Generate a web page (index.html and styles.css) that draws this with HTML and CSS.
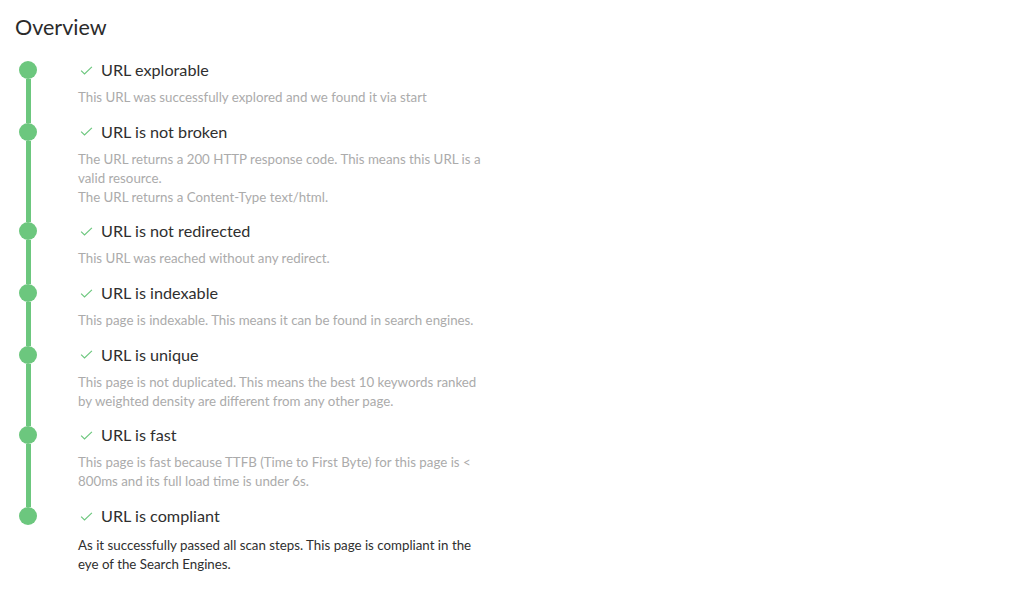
FILE: index.html
```html
<!DOCTYPE html>
<html>
<head>
<meta charset="utf-8">
<link rel="stylesheet" href="styles.css">
</head>
<body>
<main class="page">
  <h1 class="title">Overview</h1>
  <ul class="timeline">
    <li class="step first">
      <div class="rail"><span class="seg top"></span><span class="dot"></span><span class="seg bottom"></span></div>
      <div class="content">
        <div class="step-title"><svg class="check" viewBox="0 0 14 10"><path d="M1 5.2 L4.8 8.8 L13 1"/></svg>URL explorable</div>
        <p class="desc">This URL was successfully explored and we found it via start</p>
      </div>
    </li>
    <li class="step">
      <div class="rail"><span class="seg top"></span><span class="dot"></span><span class="seg bottom"></span></div>
      <div class="content">
        <div class="step-title"><svg class="check" viewBox="0 0 14 10"><path d="M1 5.2 L4.8 8.8 L13 1"/></svg>URL is not broken</div>
        <p class="desc">The URL returns a 200 HTTP response code. This means this URL is a valid resource.<br>The URL returns a Content-Type text/html.</p>
      </div>
    </li>
    <li class="step">
      <div class="rail"><span class="seg top"></span><span class="dot"></span><span class="seg bottom"></span></div>
      <div class="content">
        <div class="step-title"><svg class="check" viewBox="0 0 14 10"><path d="M1 5.2 L4.8 8.8 L13 1"/></svg>URL is not redirected</div>
        <p class="desc">This URL was reached without any redirect.</p>
      </div>
    </li>
    <li class="step">
      <div class="rail"><span class="seg top"></span><span class="dot"></span><span class="seg bottom"></span></div>
      <div class="content">
        <div class="step-title"><svg class="check" viewBox="0 0 14 10"><path d="M1 5.2 L4.8 8.8 L13 1"/></svg>URL is indexable</div>
        <p class="desc">This page is indexable. This means it can be found in search engines.</p>
      </div>
    </li>
    <li class="step">
      <div class="rail"><span class="seg top"></span><span class="dot"></span><span class="seg bottom"></span></div>
      <div class="content">
        <div class="step-title"><svg class="check" viewBox="0 0 14 10"><path d="M1 5.2 L4.8 8.8 L13 1"/></svg>URL is unique</div>
        <p class="desc">This page is not duplicated. This means the best 10 keywords ranked by weighted density are different from any other page.</p>
      </div>
    </li>
    <li class="step">
      <div class="rail"><span class="seg top"></span><span class="dot"></span><span class="seg bottom"></span></div>
      <div class="content">
        <div class="step-title"><svg class="check" viewBox="0 0 14 10"><path d="M1 5.2 L4.8 8.8 L13 1"/></svg>URL is fast</div>
        <p class="desc">This page is fast because TTFB (Time to First Byte) for this page is &lt; 800ms and its full load time is under 6s.</p>
      </div>
    </li>
    <li class="step last">
      <div class="rail"><span class="seg top"></span><span class="dot"></span><span class="seg bottom"></span></div>
      <div class="content">
        <div class="step-title"><svg class="check" viewBox="0 0 14 10"><path d="M1 5.2 L4.8 8.8 L13 1"/></svg>URL is compliant</div>
        <p class="desc dark">As it successfully passed all scan steps. This page is compliant in the eye of the Search Engines.</p>
      </div>
    </li>
  </ul>
</main>
</body>
</html>
```
FILE: styles.css
```css
* { box-sizing: border-box; }
html, body { margin: 0; padding: 0; background: #fff; }
body {
  font-family: Lato, "Open Sans", "Liberation Sans", sans-serif;
  color: #333;
}
.page {
  padding: 12px 15px 0 15px;
}
.title {
  margin: 0;
  font-size: 21.5px;
  line-height: 30px;
  font-weight: 400;
  color: #2b2b2b;
}
.timeline {
  list-style: none;
  margin: 16px 0 0 0;
  padding: 0;
}
.step {
  display: grid;
  grid-template-columns: 18px 1fr;
  column-gap: 41px;
  margin-left: 4px;
}
.rail {
  display: flex;
  flex-direction: column;
  align-items: center;
}
.seg {
  width: 5px;
  background: #6cc77e;
}
.seg.top { height: 3px; flex: none; }
.seg.bottom { flex: 1; }
.first .seg.top { background: transparent; }
.last .seg.bottom { background: transparent; }
.dot {
  width: 18px;
  height: 18px;
  border-radius: 50%;
  background: #6cc77e;
  flex: none;
}
.content {
  padding-bottom: 12.7px;
  width: 410px;
}
.step-title {
  display: flex;
  align-items: center;
  height: 24px;
  font-size: 16.2px;
  line-height: 24px;
  color: #2f2f2f;
  padding-left: 2px;
}
.check {
  width: 13px;
  height: 9px;
  margin-right: 8px;
  fill: none;
  stroke: #6cc77e;
  stroke-width: 1.3;
}
.desc {
  margin: 6px 0 0 0;
  font-size: 13.3px;
  line-height: 19px;
  color: #ababab;
}
.desc.dark { color: #2f2f2f; margin-top: 8px; }
```
